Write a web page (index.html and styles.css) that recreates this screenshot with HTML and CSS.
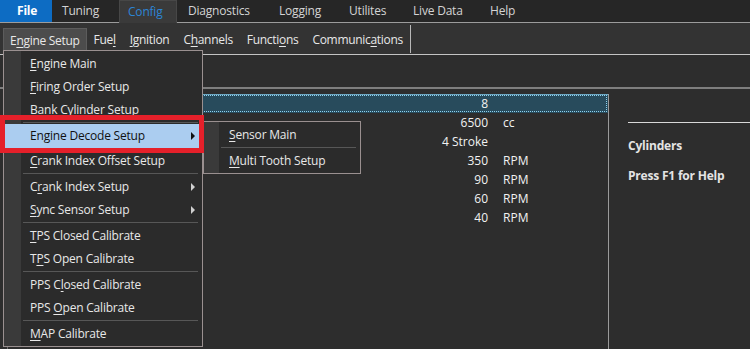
FILE: index.html
```html
<!DOCTYPE html>
<html lang="en">
<head>
    <meta charset="UTF-8">
    <title>Config - Engine Setup</title>
    <link rel="stylesheet" href="styles.css">
</head>
<body>
    <div class="app">
        <!-- Main menu bar -->
        <nav class="menubar">
            <span class="tab tab-file">File</span>
            <span class="tab tab-tuning">Tuning</span>
            <span class="tab tab-config">Config</span>
            <span class="tab tab-diag">Diagnostics</span>
            <span class="tab tab-log">Logging</span>
            <span class="tab tab-util">Utilites</span>
            <span class="tab tab-live">Live Data</span>
            <span class="tab">Help</span>
        </nav>

        <!-- Config ribbon -->
        <div class="toolbar">
            <div class="tool-group">
                <span class="tool tool-open">E<u>n</u>gine Setup</span>
                <span class="tool">Fue<u>l</u></span>
                <span class="tool"><u>I</u>gnition</span>
                <span class="tool">C<u>h</u>annels</span>
                <span class="tool">Functi<u>o</u>ns</span>
                <span class="tool">Communic<u>a</u>tions</span>
            </div>
        </div>

        <div class="strip"></div>

        <main class="workspace">
            <!-- labels sit under the open menu, so they are left empty -->
            <section class="grid-panel">
                <div class="row row-selected"><span class="label"></span><span class="value">8</span><span class="unit"></span></div>
                <div class="row"><span class="label"></span><span class="value">6500</span><span class="unit">cc</span></div>
                <div class="row"><span class="label"></span><span class="value">4 Stroke</span><span class="unit"></span></div>
                <div class="row"><span class="label"></span><span class="value">350</span><span class="unit">RPM</span></div>
                <div class="row"><span class="label"></span><span class="value">90</span><span class="unit">RPM</span></div>
                <div class="row"><span class="label"></span><span class="value">60</span><span class="unit">RPM</span></div>
                <div class="row"><span class="label"></span><span class="value">40</span><span class="unit">RPM</span></div>
            </section>
            <aside class="help-panel">
                <div class="help-rule"></div>
                <p class="help-title">Cylinders</p>
                <p class="help-text">Press F1 for Help</p>
            </aside>
        </main>

        <!-- Engine Setup dropdown -->
        <div class="dropdown">
            <div class="item"><u>E</u>ngine Main</div>
            <div class="item"><u>F</u>iring Order Setup</div>
            <div class="item"><u>B</u>ank Cylinder Setup</div>
            <div class="sep"></div>
            <div class="item item-active">En<u>g</u>ine Decode Setup<span class="arrow"></span></div>
            <div class="item"><u>C</u>rank Index Offset Setup</div>
            <div class="sep"></div>
            <div class="item">C<u>r</u>ank Index Setup<span class="arrow"></span></div>
            <div class="item"><u>S</u>ync Sensor Setup<span class="arrow"></span></div>
            <div class="sep"></div>
            <div class="item"><u>T</u>PS Closed Calibrate</div>
            <div class="item">T<u>P</u>S Open Calibrate</div>
            <div class="sep"></div>
            <div class="item">PPS C<u>l</u>osed Calibrate</div>
            <div class="item">PPS <u>O</u>pen Calibrate</div>
            <div class="sep"></div>
            <div class="item"><u>M</u>AP Calibrate</div>
        </div>

        <div class="submenu">
            <div class="item"><u>S</u>ensor Main</div>
            <div class="sep"></div>
            <div class="item"><u>M</u>ulti Tooth Setup</div>
        </div>

        <!-- Red callout around the highlighted item -->
        <div class="callout"></div>
    </div>
</body>
</html>
```

FILE: styles.css
```css
/* Page */
body {
    margin: 0;
    background-color: #2d2d2d;
    font-family: "Open Sans", "Noto Sans", sans-serif;
    font-size: 12px;
    color: #e6e6e6;
}

.app {
    position: relative;
    width: 750px;
    height: 349px;
    overflow: hidden;
    background-color: #2d2d2d;
}

u {
    text-underline-offset: 2px;
}

/* Menu bar */
.menubar {
    display: flex;
    height: 22px;
    background-color: #262626;
    border-bottom: 1px solid #9c9c9c;
}

.tab {
    box-sizing: border-box;
    padding-left: 11px;
    line-height: 22px;
    color: #d4d4d4;
    letter-spacing: -0.2px;
}

.tab-file {
    width: 52px;
    padding-left: 17px;
    background-color: #0d6cc3;
    color: #ffffff;
    font-weight: 700;
}

.tab-tuning { width: 67px; padding-left: 10px; }
.tab-diag { width: 91px; }
.tab-log { width: 70px; }
.tab-util { width: 64px; }
.tab-live { width: 77px; }

.tab-config {
    width: 58px;
    height: 23px;
    padding-left: 8px;
    background-color: #3a3a3a;
    border: 1px solid #474747;
    border-bottom: none;
    color: #2c85d6;
    line-height: 21px;
}

/* Ribbon */
.toolbar {
    display: flex;
    height: 31px;
    padding-left: 3px;
    background-color: #333333;
    border-bottom: 1px solid #c4c4c4;
}

.tool-group {
    display: flex;
    align-items: center;
    border-right: 1px solid #b8b8b8;
    margin: 2px 0 1px;
}

.tool {
    padding: 0 7px;
    line-height: 23px;
    color: #e8e8e8;
    letter-spacing: -0.3px;
}

.tool-open {
    align-self: flex-end;
    padding: 0 6px;
    height: 24px;
    background-color: #4c4c4c;
    border: 1px solid #5c5c5c;
    border-bottom: none;
}

.strip {
    height: 32px;
    border-bottom: 2px solid #7e7e7e;
}

/* Workspace */
.workspace {
    display: flex;
    padding-top: 5px;
    height: 255px;
}

.grid-panel {
    width: 600px;
    margin-left: 7px;
    border-left: 1px solid #6a6a6a;
    border-right: 1px solid #9a9a9a;
}

.row {
    display: grid;
    grid-template-columns: 1fr 95px 120px;
    height: 19px;
    line-height: 19px;
    box-sizing: border-box;
}

.row .value {
    text-align: right;
    color: #f2f2f2;
}

.row .unit {
    padding-left: 15px;
    color: #f2f2f2;
}

.row-selected {
    background-color: #284b5c;
    outline: 1px dotted #8fd2ef;
    outline-offset: -2px;
    border-top: 1px solid #6ea9c4;
    line-height: 17px;
}

.help-panel {
    flex: 1;
    padding-left: 19px;
}

.help-rule {
    height: 1px;
    margin-top: 28px;
    background-color: #d8d8d8;
}

.help-title,
.help-text {
    margin: 0;
    font-weight: 700;
    color: #e4e4e4;
    letter-spacing: -0.2px;
}

.help-title {
    margin-top: 14px;
}

.help-text {
    margin-top: 13px;
}

/* Dropdown menus */
.dropdown,
.submenu {
    position: absolute;
    box-sizing: border-box;
    background-color: #2b2b2b;
    background-image: linear-gradient(to right, #3a3a3a 17px, transparent 17px);
    border: 1px solid #9a9090;
    padding: 1px 0;
}

.dropdown {
    left: 3px;
    top: 50px;
    width: 200px;
}

.submenu {
    left: 203px;
    top: 121px;
    width: 158px;
    height: 53px;
    background-image: linear-gradient(to right, #3a3a3a 15px, transparent 15px);
}

.item {
    position: relative;
    height: 23px;
    line-height: 23px;
    padding-left: 26px;
    color: #e8e8e8;
    letter-spacing: -0.2px;
}

.submenu .item {
    padding-left: 25px;
}

.item-active {
    height: 25px;
    line-height: 24px;
    background-color: #abcdf0;
    color: #111111;
}

.sep {
    height: 1px;
    margin: 1px 4px 1px 19px;
    background-color: #575757;
}

.submenu .sep {
    margin: 1px 4px 1px 17px;
}

.arrow {
    position: absolute;
    right: 7px;
    top: 8px;
    border-left: 4px solid #d0d0d0;
    border-top: 4px solid transparent;
    border-bottom: 4px solid transparent;
}

.item-active .arrow {
    border-left-color: #111111;
}

.callout {
    position: absolute;
    left: 0;
    top: 115px;
    width: 204px;
    height: 38px;
    box-sizing: border-box;
    border: 5px solid #e5202a;
}
```
